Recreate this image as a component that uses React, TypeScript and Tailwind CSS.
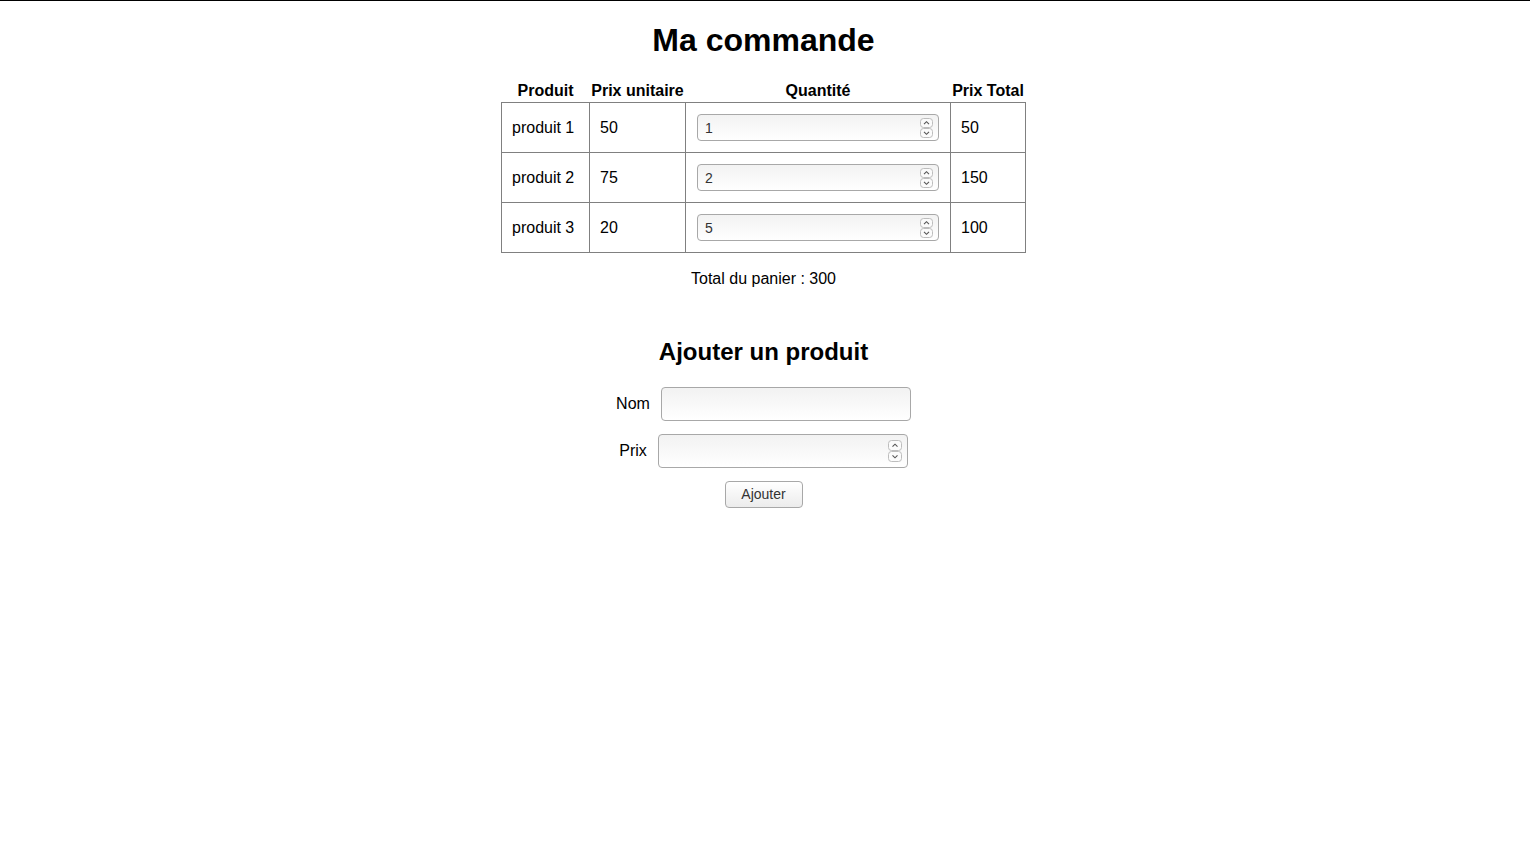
import { useState } from "react";

type Produit = { nom: string; prix: number; qte: number };

const Spinner = ({ w, h }: { w: number; h: number }) => (
    <div className="absolute right-[6px] top-1/2 -translate-y-1/2 flex flex-col">
        <svg width={w} height={h} viewBox={`0 0 ${w} ${h}`}>
            <rect x="0.5" y="0.5" width={w - 1} height={h - 1} rx="3" fill="#fbfbfb" stroke="#bdbdbd" />
            <path d={`M${w / 2 - 2.5} ${h / 2 + 1.2} L${w / 2} ${h / 2 - 1.3} L${w / 2 + 2.5} ${h / 2 + 1.2}`} fill="none" stroke="#555" strokeWidth="1.1" />
        </svg>
        <svg width={w} height={h} viewBox={`0 0 ${w} ${h}`}>
            <rect x="0.5" y="0.5" width={w - 1} height={h - 1} rx="3" fill="#fbfbfb" stroke="#bdbdbd" />
            <path d={`M${w / 2 - 2.5} ${h / 2 - 1.2} L${w / 2} ${h / 2 + 1.3} L${w / 2 + 2.5} ${h / 2 - 1.2}`} fill="none" stroke="#555" strokeWidth="1.1" />
        </svg>
    </div>
);

const NumberField = ({ value, onChange, className, big }: { value: string; onChange: (v: string) => void; className: string; big?: boolean }) => (
    <div className={"relative " + className}>
        <input
            type="text"
            value={value}
            onChange={(e) => onChange(e.target.value)}
            className="w-full h-full rounded-[4px] border border-[#a8a8a8] bg-gradient-to-b from-[#f2f2f2] to-white pl-[7px] pr-6 text-[14px] text-[#333] outline-none"
        />
        {big ? <Spinner w={14} h={11} /> : <Spinner w={13} h={10} />}
    </div>
);

const App = () => {
    const [produits, setProduits] = useState<Produit[]>([
        { nom: "produit 1", prix: 50, qte: 1 },
        { nom: "produit 2", prix: 75, qte: 2 },
        { nom: "produit 3", prix: 20, qte: 5 },
    ]);
    const [nom, setNom] = useState("");
    const [prix, setPrix] = useState("");

    const total = produits.reduce((s, p) => s + p.prix * p.qte, 0);

    const setQte = (i: number, v: string) => {
        const copie = [...produits];
        copie[i] = { ...copie[i], qte: Number(v) || 0 };
        setProduits(copie);
    };

    const ajouter = () => {
        if (!nom || !prix) return;
        setProduits([...produits, { nom, prix: Number(prix), qte: 1 }]);
        setNom("");
        setPrix("");
    };

    return (
        <div className="min-h-screen border-t border-black bg-white pr-[3px] text-black font-['Liberation_Sans',sans-serif] text-[16px]">
            <h1 className="mt-[21px] text-center text-[32px] leading-[37px] font-bold">Ma commande</h1>

            <table className="mx-auto mt-[20px] border-collapse table-fixed w-[524px]">
                <colgroup>
                    <col className="w-[88px]" />
                    <col className="w-[96px]" />
                    <col className="w-[265px]" />
                    <col className="w-[75px]" />
                </colgroup>
                <thead>
                    <tr className="h-[23px]">
                        <th className="font-bold text-center p-0 leading-[23px]">Produit</th>
                        <th className="font-bold text-center p-0 leading-[23px]">Prix unitaire</th>
                        <th className="font-bold text-center p-0 leading-[23px]">Quantité</th>
                        <th className="font-bold text-center p-0 leading-[23px]">Prix Total</th>
                    </tr>
                </thead>
                <tbody>
                    {produits.map((p, i) => (
                        <tr key={i} className="h-[50px]">
                            <td className="border border-[#808080] px-[10px]">{p.nom}</td>
                            <td className="border border-[#808080] px-[10px]">{p.prix}</td>
                            <td className="border border-[#808080] px-[11px]">
                                <NumberField className="w-[242px] h-[27px]" value={String(p.qte)} onChange={(v) => setQte(i, v)} />
                            </td>
                            <td className="border border-[#808080] px-[10px]">{p.prix * p.qte}</td>
                        </tr>
                    ))}
                </tbody>
            </table>

            <p className="mt-[16px] text-center leading-[19px]">Total du panier : {total}</p>

            <h2 className="mt-[50px] text-center text-[24px] leading-[28px] font-bold">Ajouter un produit</h2>

            <div className="mt-[21px] flex flex-col items-center gap-[13px]">
                <div className="flex items-center gap-[11px]">
                    <label>Nom</label>
                    <input
                        value={nom}
                        onChange={(e) => setNom(e.target.value)}
                        className="w-[250px] h-[34px] rounded-[4px] border border-[#a8a8a8] bg-gradient-to-b from-[#f2f2f2] to-white px-2 outline-none"
                    />
                </div>
                <div className="flex items-center gap-[11px]">
                    <label>Prix</label>
                    <NumberField className="w-[250px] h-[34px]" value={prix} onChange={setPrix} big />
                </div>
                <button
                    onClick={ajouter}
                    className="w-[78px] h-[27px] rounded-[4px] border border-[#a8a8a8] bg-gradient-to-b from-white to-[#ececec] text-[14px] text-[#333]"
                >
                    Ajouter
                </button>
            </div>
        </div>
    );
};

export default App;
